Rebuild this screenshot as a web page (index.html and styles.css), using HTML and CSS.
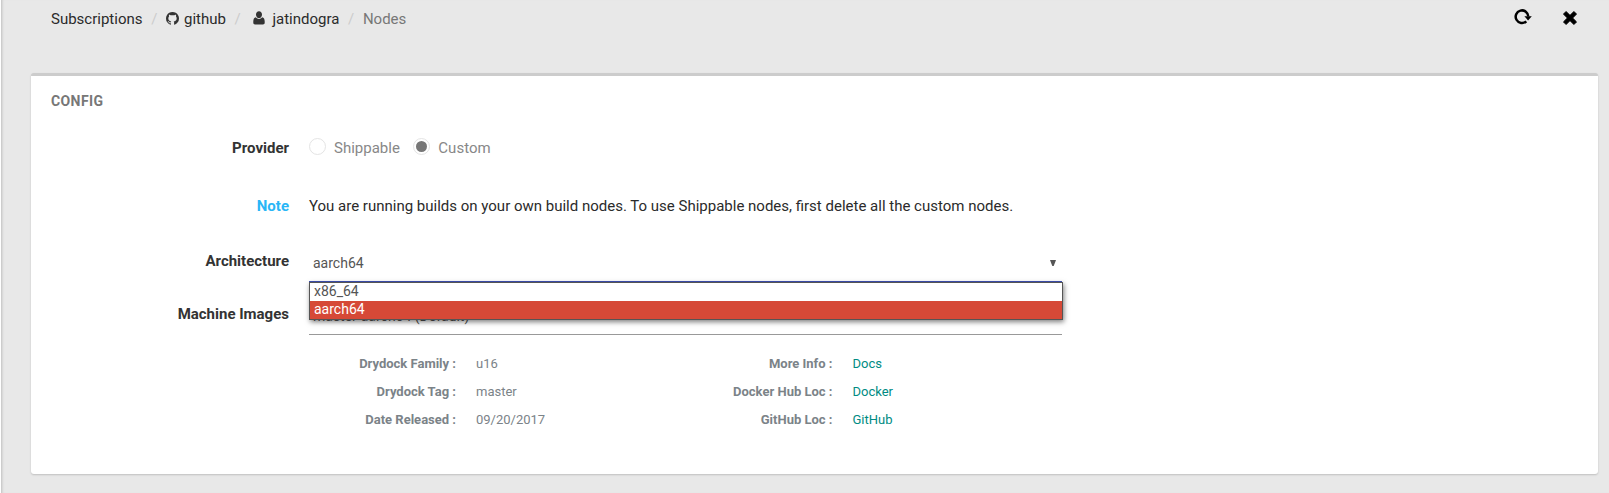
FILE: index.html
```html
<!DOCTYPE html>
<html lang="en">
<head>
<meta charset="utf-8">
<title>Nodes</title>
<link rel="stylesheet" href="styles.css">
</head>
<body>
<div class="page">
  <header class="topbar">
    <nav class="crumbs">
      <a class="crumb">Subscriptions</a>
      <span class="sep">/</span>
      <a class="crumb crumb-github"><svg class="icon-github" viewBox="0 0 1536 1536"><path d="M768 0q209 0 385.500 103t279.500 279.500 103 385.500q0 251-146.500 451.500t-378.500 277.500q-27 5-40-7t-13-30q0-3 .5-76.500t.5-134.500q0-97-52-142 57-6 102.500-18t94-39 81-66.500 53-105 20.500-150.500q0-119-79-206 37-91-8-204-28-9-81 11t-92 44l-38 24q-93-26-192-26t-192 26q-16-11-42.500-27t-83.500-38.500-85-13.500q-45 113-8 204-79 87-79 206 0 85 20.500 150t52.500 105 80.500 67 94 39 102.500 18q-39 36-49 103-21 10-45 15t-57 5-65.500-21.500-55.500-62.500q-19-32-48.500-52t-49.500-24l-20-3q-21 0-29 4.500t-5 11.500 9 14 13 12l7 5q22 10 43.500 38t31.500 51l10 23q13 38 44 61.500t67 30 69.500 7 55.500-3.500l23-4q0 38 .5 88.500t.5 54.500q0 18-13 30t-40 7q-232-77-378.500-277.500t-146.500-451.500q0-209 103-385.500t279.500-279.500 385.500-103z"/></svg>github</a>
      <span class="sep">/</span>
      <a class="crumb crumb-user"><svg class="icon-user" viewBox="0 0 12 14"><path d="M6 .2C4.200.2 3 1.500 3 3.400s1.300 3.700 3 3.700 3-1.800 3-3.700S7.800.2 6 .2zM2.900 6.200C1.100 6.600.3 8 .3 10.600v1.100c0 1.100.7 1.700 1.700 1.700h8c1 0 1.700-.6 1.700-1.700v-1.100c0-2.600-.8-4-2.600-4.400C8.300 7.300 7.300 7.900 6 7.900S3.700 7.300 2.900 6.200z"/></svg>jatindogra</a>
      <span class="sep">/</span>
      <span class="current">Nodes</span>
    </nav>
    <div class="actions">
      <svg class="icon-refresh" viewBox="0 0 18 16"><path d="M12.300 12.300A6.300 6.300 0 1 1 14.300 7.600" fill="none" stroke="#000" stroke-width="2.500"/><path d="M10.400 7.200h7.400l-3.700 4.200z"/></svg>
      <svg class="icon-close" viewBox="0 0 14 14"><path d="M3.100.4 7 4.300 10.900.4l2.700 2.700L9.700 7l3.900 3.900-2.700 2.700L7 9.700l-3.900 3.900L.4 10.900 4.300 7 .4 3.100z" stroke="#000" stroke-width=".8" stroke-linejoin="round"/></svg>
    </div>
  </header>

  <main class="card">
    <h2 class="title">CONFIG</h2>
    <div class="row provider">
      <span class="label">Provider</span>
      <div class="radios">
        <span class="radio"></span><span class="radio-text first">Shippable</span>
        <span class="radio checked"></span><span class="radio-text second">Custom</span>
      </div>
    </div>
    <div class="row note">
      <span class="label info">Note</span>
      <span class="note-text">You are running builds on your own build nodes. To use Shippable nodes, first delete all the custom nodes.</span>
    </div>
    <div class="row architecture">
      <span class="label">Architecture</span>
      <div class="select open">
        <span>aarch64</span>
        <svg class="caret" viewBox="0 0 6 6"><path d="M0 0h6L3.700 6H2.300z"/></svg>
        <div class="menu">
          <div class="option">x86_64</div>
          <div class="option selected">aarch64</div>
        </div>
      </div>
    </div>
    <div class="row images">
      <span class="label">Machine Images</span>
      <div class="select"><span>master-aarch64 (Default)</span></div>
    </div>
    <div class="details">
      <span class="key">Drydock Family :</span><span class="value">u16</span>
      <span class="key">More Info :</span><a class="link">Docs</a>
      <span class="key">Drydock Tag :</span><span class="value">master</span>
      <span class="key">Docker Hub Loc :</span><a class="link">Docker</a>
      <span class="key">Date Released :</span><span class="value">09/20/2017</span>
      <span class="key">GitHub Loc :</span><a class="link">GitHub</a>
    </div>
  </main>
</div>
</body>
</html>
```
FILE: styles.css
```css
* { box-sizing: border-box; }
body {
  margin: 0;
  background: #fff;
  font-family: Roboto, sans-serif;
  font-size: 15px;
  line-height: 20px;
  color: #333;
}
.page {
  height: 493px;
  margin-left: 1px;
  padding: 0 11px 0 29px;
  border-left: 1px solid #ccc;
  background: #e8e8e8;
  box-shadow: inset 2px 0 2px -1px #d4d4d4;
  overflow: hidden;
}
.topbar {
  display: flex;
  justify-content: space-between;
  height: 73px;
  padding: 9px 21px 0 20px;
}
.crumbs { display: flex; height: 20px; color: #2b2b2b; white-space: nowrap; }
.crumb { display: flex; }
.sep { width: 23.500px; text-align: center; color: #ccc; }
.current { color: #777; }
svg { display: block; flex: none; }
.icon-github { width: 13px; height: 13px; margin: 3px 5px 0 0; fill: #333; }
.crumb-user { padding-left: 4px; }
.icon-user { width: 12px; height: 14px; margin: 2px 7px 0 0; fill: #333; }
.actions { display: flex; gap: 31px; }
.icon-refresh { width: 18px; height: 16px; }
.icon-close { width: 14px; height: 14px; margin-top: 2px; }

.card {
  height: 401px;
  border-top: 3px solid #ccc;
  border-radius: 3px;
  background: #fff;
  box-shadow: 0 1px 2px rgba(0, 0, 0, .18);
}
.title {
  height: 50px;
  margin: 0;
  padding: 15px 20px 0;
  font-size: 14px;
  font-weight: 700;
  letter-spacing: .4px;
  color: #777;
}
.row { display: grid; grid-template-columns: 258px 753px; column-gap: 20px; align-items: center; }
.label { font-weight: 700; text-align: right; }
.info { color: #29b6f6; }
.provider { height: 44px; }
.radios { display: flex; align-items: center; color: #888; }
.radio { width: 17px; height: 17px; margin-top: -3px; border: 1px solid #e4e4e4; border-radius: 50%; }
.radio-text { margin-left: 8px; }
.first { margin-right: 13px; }
.second { margin-left: 8.500px; }
.checked { padding: 2px; }
.checked::before { content: ""; display: block; width: 11px; height: 11px; border-radius: 50%; background: #777; }
.note { height: 72px; }
.note-text { color: #2b2b2b; white-space: nowrap; }
.architecture { height: 41px; align-items: start; padding-top: 9px; }
.select {
  position: relative;
  display: flex;
  justify-content: space-between;
  padding: 0 6px 0 4px;
  font-size: 14px;
  color: #555;
}
.open { z-index: 1; height: 32px; padding-top: 2px; border-bottom: 2px solid #3f51b5; }
.caret { width: 6px; height: 6px; margin-top: 7px; fill: #555; }
.menu {
  position: absolute;
  top: 31px;
  left: 0;
  width: 754px;
  border: 1px solid #555;
  background: #fff;
  box-shadow: 1px 2px 5px rgba(0, 0, 0, .5);
}
.option { height: 18px; padding-left: 4px; line-height: 16px; }
.selected { background: #d64937; color: #fff; }
.images { height: 52px; align-items: end; }
.images .label { margin-bottom: 11px; }
.images .select { height: 29px; border-bottom: 1px solid #999; }
.details {
  display: grid;
  grid-template-columns: 425px 236.500px 100px 100px;
  grid-auto-rows: 28px;
  column-gap: 20px;
  margin-top: 15px;
  align-items: center;
  font-size: 13px;
  color: #7b8388;
  white-space: nowrap;
}
.key { display: flex; justify-content: flex-end; font-weight: 700; }
.link { color: #008b83; }
```
